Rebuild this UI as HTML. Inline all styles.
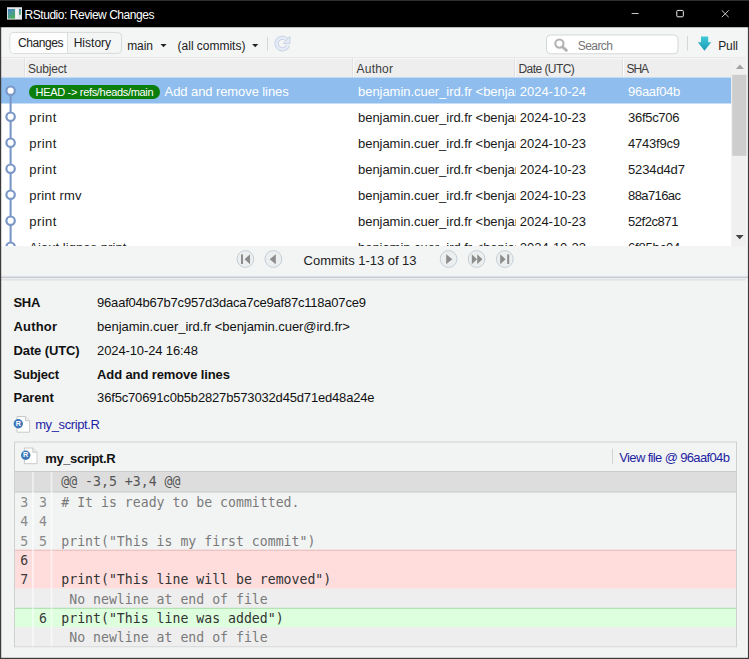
<!DOCTYPE html>
<html><head><meta charset="utf-8">
<style>
html,body{margin:0;padding:0;}
body{width:749px;height:659px;overflow:hidden;background:#f2f4f4;font-family:"Liberation Sans","DejaVu Sans",sans-serif;position:relative;}
#bg{position:absolute;left:0;top:0;}
.t{position:absolute;white-space:pre;}
#rows{position:absolute;left:1px;top:78px;width:731px;height:168px;overflow:hidden;}
pre.m{position:absolute;margin:0;white-space:pre;font-family:"DejaVu Sans Mono","Liberation Mono",monospace;font-size:13.2px;line-height:19.333px;color:#7a7a7a;}
</style></head><body>
<svg id="bg" width="749" height="659" viewBox="0 0 749 659">
<!-- title bar -->
<rect x="0" y="0" width="749" height="27.5" fill="#000"/>
<rect x="0" y="0" width="749" height="1" fill="#2e2e2e"/>
<defs><linearGradient id="ig" x1="0.2" y1="0" x2="0.8" y2="1"><stop offset="0" stop-color="#4b7fbb"/><stop offset="0.35" stop-color="#4a96a0"/><stop offset="1" stop-color="#4cb04e"/></linearGradient></defs><g id="appicon"><rect x="7" y="7.2" width="15" height="12.4" fill="#e3e6e8"/><rect x="7.9" y="9" width="7.1" height="9.6" fill="url(#ig)"/><rect x="15.6" y="8.6" width="2.6" height="10" fill="#f2f3f4"/><rect x="19" y="9" width="1.9" height="5.8" fill="url(#ig)"/></g>
<path d="M631.7 13.5H638.6" stroke="#c8c8c8" stroke-width="1"/>
<rect x="676.8" y="10.4" width="6.5" height="6.4" rx="0.9" fill="none" stroke="#f0f0f0" stroke-width="1"/>
<path d="M721.8 10.4L728.7 17.2M728.7 10.4L721.8 17.2" stroke="#e0e0e0" stroke-width="0.9"/>
<!-- toolbar -->
<rect x="0" y="27.5" width="749" height="30.5" fill="#f4f6f6"/>
<rect x="9.9" y="32.4" width="111.6" height="21" rx="4" fill="#f4f6f6" stroke="#d8dbdb" stroke-width="1"/>
<path d="M14 32.9H67.5V52.9H14A3.6 3.6 0 0 1 10.4 49.3V36.5A3.6 3.6 0 0 1 14 32.9Z" fill="#fdfdfd"/>
<path d="M67.5 33V53" stroke="#dcdfdf" stroke-width="1"/>
<path d="M160.5 43.9H166.6L163.55 47.3Z" fill="#222"/>
<path d="M252.1 43.9H258.3L255.2 47.3Z" fill="#222"/>
<path d="M267.5 37V50.5" stroke="#d4d7d7" stroke-width="1"/>
<g id="refresh"><path d="M286.7 39.7A5.8 5.8 0 1 0 287.9 45.2" fill="none" stroke="#c4cee2" stroke-width="4.2"/><path d="M286.7 39.7A5.8 5.8 0 1 0 287.9 45.2" fill="none" stroke="#e6ecf7" stroke-width="2.6"/><path d="M290 36.4V43.4H283.4Z" fill="#e6ecf7" stroke="#c4cee2" stroke-width="0.9" stroke-linejoin="round"/></g>
<rect x="546.5" y="35" width="131.5" height="18.8" rx="4" fill="#fff" stroke="#d5d8d8" stroke-width="1"/>
<g id="mag"><circle cx="559.4" cy="43.6" r="4.1" fill="none" stroke="#b2b2b2" stroke-width="2.1"/><path d="M562.6 47L566.4 50.4" stroke="#b2b2b2" stroke-width="2.8" stroke-linecap="round"/></g>
<path d="M687.5 36V50.5" stroke="#d4d7d7" stroke-width="1"/>
<defs><linearGradient id="pg" x1="0" y1="0" x2="0" y2="1"><stop offset="0" stop-color="#40c9d8"/><stop offset="1" stop-color="#1b9cb5"/></linearGradient></defs><g id="pull"><path d="M701 36.4H708.2V42.2H711.2L704.5 50.8L697.8 42.2H701Z" fill="url(#pg)"/></g>
<!-- header -->
<rect x="0" y="57.5" width="749" height="20" fill="#eeeeee"/>
<rect x="0" y="57" width="749" height="1" fill="#e7e9e9"/>
<rect x="0" y="58" width="731" height="1" fill="#f6f6f6"/>
<g stroke-width="1"><path d="M24.5 58V77.5M352.5 58V77.5M514.5 58V77.5M622.5 58V77.5" stroke="#e0e0e0"/><path d="M25.5 58V77.5M353.5 58V77.5M515.5 58V77.5M623.5 58V77.5" stroke="#fbfbfb"/></g>
<!-- table body -->
<rect x="1" y="77.5" width="730.3" height="168.5" fill="#fff"/>
<rect x="1" y="77.5" width="730.3" height="26" fill="#8ebdee"/>
<rect x="29" y="85" width="131" height="14" rx="7" fill="#0b7e0b"/>
<clipPath id="tc"><rect x="0" y="77.5" width="732" height="168.5"/></clipPath>
<g clip-path="url(#tc)"><path d="M10.6 91V250" stroke="#7a97c8" stroke-width="2.1"/><g fill="#fff" stroke="#7a97c8" stroke-width="2.2"><circle cx="10.6" cy="90.7" r="4.2"/><circle cx="10.6" cy="116.7" r="4.2"/><circle cx="10.6" cy="142.7" r="4.2"/><circle cx="10.6" cy="168.7" r="4.2"/><circle cx="10.6" cy="194.7" r="4.2"/><circle cx="10.6" cy="220.7" r="4.2"/><circle cx="10.6" cy="246.7" r="4.2"/></g></g>
<!-- scrollbar -->
<rect x="731.3" y="57.5" width="14.7" height="188.5" fill="#f0f0f0"/>
<rect x="746" y="57.5" width="2" height="188.5" fill="#f5f7f7"/>
<rect x="732.2" y="74.8" width="14.3" height="81" fill="#cdcdcd"/>
<path d="M735.9 68.9H743.9L739.9 64.6Z" fill="#a3a3a3"/>
<path d="M735.7 234.9H743.7L739.7 239.3Z" fill="#454545"/>
<!-- pager -->
<rect x="1" y="246" width="747" height="30" fill="#f3f5f5"/>
<g fill="#eceff0" stroke="#c6ced6" stroke-width="1"><circle cx="245.4" cy="259" r="8.4"/><circle cx="273.4" cy="259" r="8.4"/><circle cx="448.6" cy="259" r="8.4"/><circle cx="476.6" cy="259" r="8.4"/><circle cx="504.8" cy="259" r="8.4"/></g>
<g fill="#8c8c8c"><rect x="241" y="254.4" width="2" height="9.6"/><path d="M250 254.2V264.2L244.6 259.2Z"/><path d="M275.8 254.2V264.2L269.7 259.2Z"/><path d="M446.2 254.2V264.2L452.3 259.2Z"/><path d="M471.8 254.2V264.2L477 259.2Z"/><path d="M477.2 254.2V264.2L482.4 259.2Z"/><path d="M500.2 254.2V264.2L505.6 259.2Z"/><rect x="507.2" y="254.4" width="2" height="9.6"/></g>
<!-- splitter -->
<rect x="1" y="275" width="747" height="1" fill="#eff1f2"/>
<rect x="1" y="276" width="747" height="1" fill="#dfe2e7"/>
<rect x="1" y="277" width="747" height="1" fill="#c4c9d3"/>
<rect x="1" y="278" width="747" height="1" fill="#edeff1"/>
<!-- details -->
<rect x="1" y="279" width="747" height="380" fill="#f2f4f4"/><rect x="1" y="279" width="747" height="1" fill="#e0e2e4"/><rect x="1" y="280" width="747" height="1" fill="#e9ebeb"/>
<g id="ficon1"><path d="M17 416.5H25.4L29.6 420.7V432.2H17Z" fill="#fff" stroke="#c9c9c9" stroke-width="1" stroke-linejoin="round"/><path d="M25.4 416.5V420.7H29.6" fill="#f0f0f0" stroke="#c9c9c9" stroke-width="1" stroke-linejoin="round"/><circle cx="18.3" cy="423.8" r="4.7" fill="#3f78ba"/></g>
<!-- diff box -->
<rect x="14.5" y="442" width="722" height="230" fill="#f2f4f4" stroke="#cfd1d1" stroke-width="1"/>
<g id="ficon2"><path d="M24.4 448H32.8L37 452.2V463.7H24.4Z" fill="#fff" stroke="#c9c9c9" stroke-width="1" stroke-linejoin="round"/><path d="M32.8 448V452.2H37" fill="#f0f0f0" stroke="#c9c9c9" stroke-width="1" stroke-linejoin="round"/><circle cx="25.7" cy="455.3" r="4.7" fill="#3f78ba"/></g>
<path d="M612.5 448.7V464" stroke="#d2d4d4" stroke-width="1"/>
<rect x="15" y="471.5" width="721" height="20.6" fill="#dddddd"/>
<rect x="15" y="471" width="721" height="1" fill="#cbcbcb"/>
<rect x="15" y="491.5" width="721" height="1" fill="#c9c9c9"/>
<rect x="15" y="550" width="721" height="38.7" fill="#ffdddd"/>
<rect x="15" y="549.7" width="721" height="1" fill="#eab8b8"/>
<rect x="15" y="588.7" width="721" height="19.3" fill="#eeeeee"/>
<rect x="15" y="608" width="721" height="19.3" fill="#ddffdd"/>
<rect x="15" y="607.8" width="721" height="1" fill="#a9dca9"/>
<rect x="15" y="627.3" width="721" height="19.4" fill="#eeeeee"/>
<rect x="15" y="646.4" width="721" height="1" fill="#cfd1d1"/>
<rect x="14" y="647.4" width="724" height="12" fill="#f2f4f4"/>
<path d="M32.9 472V646.5M51.5 472V646.5" stroke="#fff" stroke-opacity="0.6" stroke-width="1.6"/>

<!-- window borders -->
<rect x="0" y="27" width="1.2" height="632" fill="#3b3b3b"/>
<rect x="746" y="279" width="2" height="379" fill="#f7f8f8"/><rect x="747.9" y="27" width="1.1" height="632" fill="#3b3b3b"/>
<rect x="0" y="657.8" width="749" height="1.2" fill="#3b3b3b"/>
</svg>
<span class="t" style="left:15.7px;top:419.6px;font-size:7.2px;line-height:8px;font-weight:bold;color:#fff">R</span>
<span class="t" style="left:23.1px;top:451.1px;font-size:7.2px;line-height:8px;font-weight:bold;color:#fff">R</span>
<span class="t" style="left:24.6px;top:8px;font-size:12px;line-height:14px;color:#fff;letter-spacing:-0.467px;">RStudio: Review Changes</span>
<span class="t" style="left:18.0px;top:36px;font-size:12px;line-height:14px;color:#222;letter-spacing:-0.424px;">Changes</span>
<span class="t" style="left:73.7px;top:36px;font-size:12px;line-height:14px;color:#222;letter-spacing:0.009px;">History</span>
<span class="t" style="left:127.2px;top:39px;font-size:12px;line-height:14px;color:#222;letter-spacing:-0.072px;">main</span>
<span class="t" style="left:177.6px;top:39px;font-size:12px;line-height:14px;color:#222;letter-spacing:-0.017px;">(all commits)</span>
<span class="t" style="left:577.8px;top:39px;font-size:12px;line-height:14px;color:#757575;letter-spacing:-0.586px;">Search</span>
<span class="t" style="left:718.2px;top:39px;font-size:12px;line-height:14px;color:#222;letter-spacing:-0.072px;">Pull</span>
<span class="t" style="left:28.0px;top:62px;font-size:12px;line-height:14px;color:#3c3c3c;letter-spacing:-0.189px;">Subject</span>
<span class="t" style="left:356.6px;top:62px;font-size:12px;line-height:14px;color:#3c3c3c;letter-spacing:0.188px;">Author</span>
<span class="t" style="left:518.5px;top:62px;font-size:12px;line-height:14px;color:#3c3c3c;letter-spacing:-0.56px;">Date (UTC)</span>
<span class="t" style="left:626.6px;top:62px;font-size:12px;line-height:14px;color:#3c3c3c;letter-spacing:-1.094px;">SHA</span>
<span class="t" style="left:303.6px;top:253px;font-size:13px;line-height:15px;color:#222;letter-spacing:-0.032px;">Commits 1-13 of 13</span>
<span class="t" style="left:13.5px;top:295px;font-size:13px;line-height:15px;color:#111;letter-spacing:-0.327px;font-weight:bold;">SHA</span>
<span class="t" style="left:13.5px;top:319px;font-size:13px;line-height:15px;color:#111;letter-spacing:0.178px;font-weight:bold;">Author</span>
<span class="t" style="left:13.5px;top:343px;font-size:13px;line-height:15px;color:#111;letter-spacing:-0.108px;font-weight:bold;">Date (UTC)</span>
<span class="t" style="left:13.5px;top:367px;font-size:13px;line-height:15px;color:#111;letter-spacing:-0.228px;font-weight:bold;">Subject</span>
<span class="t" style="left:13.5px;top:390px;font-size:13px;line-height:15px;color:#111;letter-spacing:-0.034px;font-weight:bold;">Parent</span>
<span class="t" style="left:97.1px;top:295px;font-size:13px;line-height:15px;color:#111;letter-spacing:-0.219px;">96aaf04b67b7c957d3daca7ce9af87c118a07ce9</span>
<span class="t" style="left:97.1px;top:319px;font-size:13px;line-height:15px;color:#111;letter-spacing:-0.042px;">benjamin.cuer_ird.fr &lt;benjamin.cuer@ird.fr&gt;</span>
<span class="t" style="left:97.1px;top:343px;font-size:13px;line-height:15px;color:#111;letter-spacing:-0.124px;">2024-10-24 16:48</span>
<span class="t" style="left:97.1px;top:367px;font-size:13px;line-height:15px;color:#111;letter-spacing:-0.121px;font-weight:bold;">Add and remove lines</span>
<span class="t" style="left:97.1px;top:390px;font-size:13px;line-height:15px;color:#111;letter-spacing:-0.17px;">36f5c70691c0b5b2827b573032d45d71ed48a24e</span>
<span class="t" style="left:35.2px;top:417px;font-size:13px;line-height:15px;color:#1f1fa3;letter-spacing:-0.392px;">my_script.R</span>
<span class="t" style="left:45.3px;top:451px;font-size:13px;line-height:15px;color:#111;letter-spacing:-0.412px;font-weight:bold;">my_script.R</span>
<span class="t" style="left:619.3px;top:450px;font-size:13px;line-height:15px;color:#1f1fa3;letter-spacing:-0.644px;">View file @ 96aaf04b</span>
<div id="rows">
<span class="t" style="left:34.6px;top:8px;font-size:11px;line-height:12px;color:#fff;letter-spacing:-0.32px;">HEAD -&gt; refs/heads/main</span>
<span class="t" style="left:163.6px;top:6px;font-size:13px;line-height:15px;color:#fff;letter-spacing:-0.087px;">Add and remove lines</span>
<span class="t" style="left:357.0px;top:6px;font-size:13px;line-height:15px;color:#fff;letter-spacing:-0.042px;width:158.0px;overflow:hidden;">benjamin.cuer_ird.fr &lt;benjamin.cuer@ird.fr&gt;</span>
<span class="t" style="left:518.8px;top:6px;font-size:13px;line-height:15px;color:#fff;letter-spacing:-0.033px;">2024-10-24</span>
<span class="t" style="left:627.0px;top:6px;font-size:13px;line-height:15px;color:#fff;letter-spacing:-0.276px;">96aaf04b</span>
<span class="t" style="left:28.2px;top:32px;font-size:13px;line-height:15px;color:#1a1a1a;letter-spacing:0.476px;">print</span>
<span class="t" style="left:357.0px;top:32px;font-size:13px;line-height:15px;color:#1a1a1a;letter-spacing:-0.042px;width:158.0px;overflow:hidden;">benjamin.cuer_ird.fr &lt;benjamin.cuer@ird.fr&gt;</span>
<span class="t" style="left:518.8px;top:32px;font-size:13px;line-height:15px;color:#1a1a1a;letter-spacing:-0.033px;">2024-10-23</span>
<span class="t" style="left:627.0px;top:32px;font-size:13px;line-height:15px;color:#1a1a1a;letter-spacing:-0.286px;">36f5c706</span>
<span class="t" style="left:28.2px;top:58px;font-size:13px;line-height:15px;color:#1a1a1a;letter-spacing:0.476px;">print</span>
<span class="t" style="left:357.0px;top:58px;font-size:13px;line-height:15px;color:#1a1a1a;letter-spacing:-0.042px;width:158.0px;overflow:hidden;">benjamin.cuer_ird.fr &lt;benjamin.cuer@ird.fr&gt;</span>
<span class="t" style="left:518.8px;top:58px;font-size:13px;line-height:15px;color:#1a1a1a;letter-spacing:-0.033px;">2024-10-23</span>
<span class="t" style="left:627.0px;top:58px;font-size:13px;line-height:15px;color:#1a1a1a;letter-spacing:-0.229px;">4743f9c9</span>
<span class="t" style="left:28.2px;top:84px;font-size:13px;line-height:15px;color:#1a1a1a;letter-spacing:0.476px;">print</span>
<span class="t" style="left:357.0px;top:84px;font-size:13px;line-height:15px;color:#1a1a1a;letter-spacing:-0.042px;width:158.0px;overflow:hidden;">benjamin.cuer_ird.fr &lt;benjamin.cuer@ird.fr&gt;</span>
<span class="t" style="left:518.8px;top:84px;font-size:13px;line-height:15px;color:#1a1a1a;letter-spacing:-0.033px;">2024-10-23</span>
<span class="t" style="left:627.0px;top:84px;font-size:13px;line-height:15px;color:#1a1a1a;letter-spacing:-0.135px;">5234d4d7</span>
<span class="t" style="left:28.2px;top:110px;font-size:13px;line-height:15px;color:#1a1a1a;letter-spacing:0.217px;">print rmv</span>
<span class="t" style="left:357.0px;top:110px;font-size:13px;line-height:15px;color:#1a1a1a;letter-spacing:-0.042px;width:158.0px;overflow:hidden;">benjamin.cuer_ird.fr &lt;benjamin.cuer@ird.fr&gt;</span>
<span class="t" style="left:518.8px;top:110px;font-size:13px;line-height:15px;color:#1a1a1a;letter-spacing:-0.033px;">2024-10-23</span>
<span class="t" style="left:627.0px;top:110px;font-size:13px;line-height:15px;color:#1a1a1a;letter-spacing:-0.604px;">88a716ac</span>
<span class="t" style="left:28.2px;top:136px;font-size:13px;line-height:15px;color:#1a1a1a;letter-spacing:0.476px;">print</span>
<span class="t" style="left:357.0px;top:136px;font-size:13px;line-height:15px;color:#1a1a1a;letter-spacing:-0.042px;width:158.0px;overflow:hidden;">benjamin.cuer_ird.fr &lt;benjamin.cuer@ird.fr&gt;</span>
<span class="t" style="left:518.8px;top:136px;font-size:13px;line-height:15px;color:#1a1a1a;letter-spacing:-0.033px;">2024-10-23</span>
<span class="t" style="left:627.0px;top:136px;font-size:13px;line-height:15px;color:#1a1a1a;letter-spacing:-0.443px;">52f2c871</span>
<span class="t" style="left:28.2px;top:162px;font-size:13px;line-height:15px;color:#1a1a1a;letter-spacing:0.063px;">Ajout lignes print</span>
<span class="t" style="left:357.0px;top:162px;font-size:13px;line-height:15px;color:#1a1a1a;letter-spacing:-0.042px;width:158.0px;overflow:hidden;">benjamin.cuer_ird.fr &lt;benjamin.cuer@ird.fr&gt;</span>
<span class="t" style="left:518.8px;top:162px;font-size:13px;line-height:15px;color:#1a1a1a;letter-spacing:-0.033px;">2024-10-23</span>
<span class="t" style="left:627.0px;top:162px;font-size:13px;line-height:15px;color:#1a1a1a;letter-spacing:-0.171px;">6f85bc04</span>
</div>
<pre class="m" style="left:61.3px;top:472.1px;color:#555">@@ -3,5 +3,4 @@</pre>
<pre class="m" style="left:61.3px;top:493.1px"># It is ready to be committed.

print("This is my first commit")

<span style="color:#333">print("This line will be removed")</span>
 No newline at end of file
<span style="color:#333">print("This line was added")</span>
 No newline at end of file</pre>
<pre class="m" style="left:20.2px;top:493.1px;color:#8a8a8a">3
4
5
<span style="color:#3a3a3a">6
7</span></pre>
<pre class="m" style="left:38.9px;top:493.1px;color:#8a8a8a">3
4
5



<span style="color:#3a3a3a">6</span></pre>
</body></html>
